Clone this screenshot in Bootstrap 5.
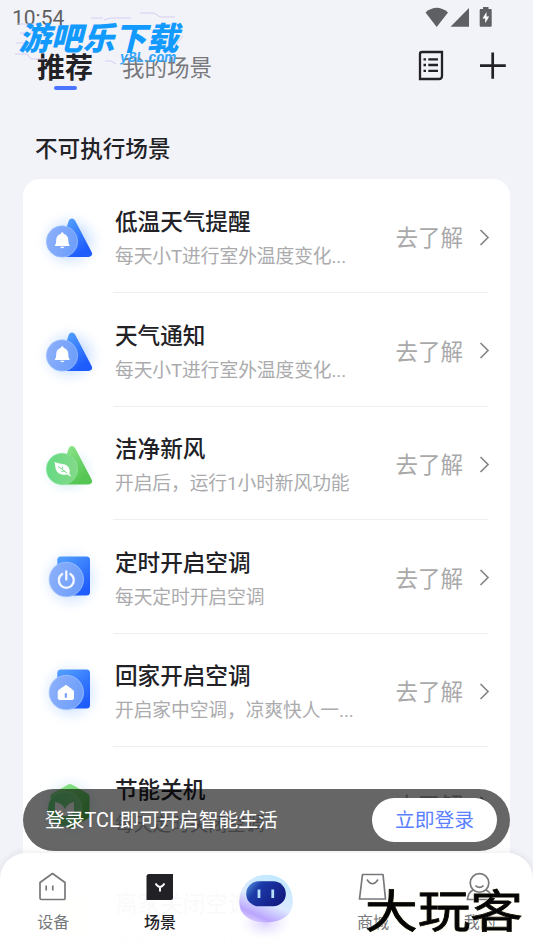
<!DOCTYPE html>
<html lang="zh-CN">
<head>
    <meta charset="UTF-8">
    <meta name="viewport" content="width=device-width, initial-scale=1.0">
    <title>场景</title>
    <link href="https://cdn.jsdelivr.net/npm/bootstrap@5.3.0/dist/css/bootstrap.min.css" rel="stylesheet">
    <style>
        body { background-color: #f2f3f8; color: #212126; font-family: Roboto, "Noto Sans CJK SC", sans-serif; }
        .screen { width: 533px; height: 948px; }
        .status-bar { height: 35px; padding: 2px 40px 0 12px; color: #5f6063; font-size: 21px; line-height: 35px; }
        .status-bar svg { margin-top: -2px; }
        .top-tabs { height: 86px; padding: 12px 26px 0 37px; }
        .tab-on { font-size: 28px; line-height: 44px; font-weight: 700; }
        .tab-line { width: 23px; height: 4px; background: #4b75ff; margin-top: -5px; }
        .tab-off { font-size: 22.5px; line-height: 43px; color: #77787c; margin-left: 29px; }
        .top-tools { margin-top: 3px; }
        .section-title { font-size: 22.6px; line-height: 30px; font-weight: 500; padding: 14px 0 0 35px; height: 58px; }
        .scene-card { margin: 0 23px; border: 0; border-radius: 17px; }
        .scene-row { height: 113.6px; padding-left: 12px; padding-right: 17px; }
        .scene-icon { width: 70px; height: 72px; flex: none; }
        .scene-body { margin-left: 8px; padding: 0; height: 114px; border-bottom: 1px solid #efeff1; margin-right: 5px; }
        .scene-name { font-size: 22.6px; line-height: 32px; font-weight: 500; margin-top: 28px; padding-left: 2px; }
        .scene-desc { font-size: 18.75px; line-height: 28px; color: #ababae; margin-top: 4px; padding-left: 2px; letter-spacing: -.08px; }
        .scene-more { font-size: 22.5px; color: #a9a9aa; line-height: 34px; height: 34px; margin-top: 42px; margin-right: -3px; }
        .scene-more svg { margin-top: -2px; }
        .login-tip { left: 23px; top: 789px; width: 487px; height: 62px; padding: 0 13px 0 22px; background: rgba(0,0,0,.6); color: #fff; font-size: 19.8px; }
        .login-text { padding-top: 2px; }
        .login-btn { width: 125px; height: 44px; background: #fff; color: #5a7fff; font-size: 19.8px; line-height: 46px; }
        .tab-bar { left: 0; top: 853px; width: 533px; height: 95px; border-radius: 26px 26px 0 0; background: rgba(255,255,255,.98); box-shadow: 0 -1px 6px rgba(60,60,90,.1); }
        .tab-item { width: 20%; padding-top: 19px; color: #77787b; font-size: 16px; line-height: 24px; }
        .tab-item svg { margin-bottom: 9px; }
        .tab-item.current { color: #212126; font-weight: 500; }
        .tab-item.robot { padding-top: 14px; }
        .site-lines { left: 10px; top: 8px; }
        .site-name { left: 22px; top: 14px; font: 900 32px/44px "Noto Sans CJK SC", sans-serif; color: #139aff; transform: skewX(-14deg); }
        .site-url { left: 120px; top: 48px; font: italic 700 13.2px/18px "Inter", sans-serif; color: #36a7ff; }
        .brand-name { left: 365px; top: 880px; font: 400 45px/58px "Noto Sans CJK SC", sans-serif; color: #050505; transform: scaleX(1.17); transform-origin: left; -webkit-text-stroke: .8px #050505; text-shadow: 0 0 2px #fff4cf, 0 0 2px #fff4cf; }
    </style>
</head>
<body>
    <!-- Shared gradients and scene shapes -->
    <svg width="0" height="0" class="position-absolute">
        <defs>
            <linearGradient id="blue" x1="0" y1="0" x2=".7" y2="1"><stop stop-color="#55a2ff"/><stop offset="1" stop-color="#1e5cfb"/></linearGradient>
            <linearGradient id="green" x1="0" y1="0" x2=".7" y2="1"><stop stop-color="#8ce58a"/><stop offset="1" stop-color="#55c553"/></linearGradient>
            <linearGradient id="blueDisc" x1="0" x2="1" y2=".3"><stop stop-color="#8fb1fa"/><stop offset="1" stop-color="#6f9ffb"/></linearGradient>
            <linearGradient id="greenDisc" x1="0" x2="1"><stop stop-color="#66db83"/><stop offset="1" stop-color="#83d889"/></linearGradient>
            <radialGradient id="glow"><stop offset=".45" stop-color="#a9cbff" stop-opacity=".5"/><stop offset=".75" stop-color="#d5e7ff" stop-opacity=".25"/><stop offset="1" stop-color="#eef6ff" stop-opacity="0"/></radialGradient>
            <radialGradient id="glowGreen"><stop offset=".4" stop-color="#a8ddc0" stop-opacity=".5"/><stop offset=".75" stop-color="#dceefa" stop-opacity=".25"/><stop offset="1" stop-color="#eefaff" stop-opacity="0"/></radialGradient>
            <linearGradient id="robotFace" x1="0" x2="1" y2=".5"><stop stop-color="#5a9ce0"/><stop offset=".35" stop-color="#1c3aa8"/><stop offset="1" stop-color="#141c84"/></linearGradient>
            <linearGradient id="robotBody" x1=".75" y1="0" x2=".25" y2="1"><stop stop-color="#bfe9ff"/><stop offset=".55" stop-color="#dceaff"/><stop offset=".85" stop-color="#bba5ff"/><stop offset="1" stop-color="#dccfff"/></linearGradient>
            <radialGradient id="robotGlow"><stop stop-color="#c5b4ff" stop-opacity=".6"/><stop offset="1" stop-color="#e4dcff" stop-opacity="0"/></radialGradient>
            <g id="bell">
                <ellipse cx="35" cy="42" rx="35" ry="32" fill="url(#glow)"/>
                <path d="M37 22.500L53.500 54H27Z" fill="url(#blue)" stroke="url(#blue)" stroke-width="7" stroke-linejoin="round"/>
                <circle cx="27" cy="42" r="15.700" fill="url(#blueDisc)" stroke="#a5c4ff" stroke-width=".6"/>
                <path d="M26 34.200c0-2 2.500-2 2.500 0 3.400 1 4.800 3.400 4.800 6.600 0 2.800.5 3.800 1.600 5.800H19.600c1.100-2 1.600-3 1.600-5.800 0-3.200 1.400-5.600 4.800-6.600Z" fill="#fff"/>
                <path d="M25 47.300h4.500q-2.200 3-4.500 0Z" fill="#fff"/>
            </g>
            <g id="square">
                <ellipse cx="36" cy="38" rx="34" ry="35" fill="url(#glow)"/>
                <rect x="22.300" y="15.500" width="32.700" height="39" rx="3.500" fill="url(#blue)"/>
                <circle cx="31.300" cy="38.500" r="17.200" fill="url(#blueDisc)" stroke="#a8c7ff" stroke-width=".7"/>
            </g>
            <path id="arrow" d="M1.500 2l7.500 7.500-7.500 7.500" fill="none" stroke="#85868a" stroke-width="1.700"/>
        </defs>
    </svg>

    <div class="screen position-relative overflow-hidden">
        <!-- Status bar -->
        <div class="status-bar d-flex justify-content-between align-items-center">
            <span>10:54</span>
            <svg width="69" height="22" viewBox="424 7 69 22" fill="#5f6063">
                <path d="M425.500 12.500q11.300-9.300 22.500 0L436.700 27Z"/>
                <path d="M469 8v18.700h-18.500Z"/>
                <path d="M483 7h5.500v2h2.200q1 0 1 1v15.700q0 1-1 1h-10q-1 0-1-1V10q0-1 1-1h2.300Z"/>
                <path d="M486.500 12l-4 6.500h2.700v4.700l4-6.700h-2.700Z" fill="#fff"/>
            </svg>
        </div>

        <!-- Page tabs -->
        <div class="top-tabs d-flex align-items-start">
            <div class="d-flex flex-column align-items-center">
                <div class="tab-on">推荐</div>
                <div class="tab-line rounded-pill"></div>
            </div>
            <div class="tab-off">我的场景</div>
            <svg class="top-tools ms-auto" width="90" height="32" viewBox="417 50 90 32" fill="none" stroke="#212126" stroke-width="2.300">
                <path d="M422 52h20v24q0 3-3 3h-19V54q0-2 2-2Z"/>
                <path d="M428.300 59.300H438M428.300 65H438M428.300 70.800H438M423.500 59.300h2.500M423.500 65h2.500M423.500 70.800h2.500"/>
                <path d="M480 65.700h25.800M492.700 52.500v26.300" stroke-width="2.700"/>
            </svg>
        </div>

        <div class="section-title">不可执行场景</div>

        <!-- Scene list -->
        <div class="card scene-card">
            <div class="scene-row d-flex">
                <svg class="scene-icon mt-4" viewBox="0 3.500 70 72"><use href="#bell"/></svg>
                <div class="scene-body flex-grow-1 d-flex justify-content-between">
                    <div><div class="scene-name">低温天气提醒</div><div class="scene-desc">每天小T进行室外温度变化...</div></div>
                    <div class="scene-more d-flex align-items-center">去了解<svg class="ms-3" width="12" height="19"><use href="#arrow"/></svg></div>
                </div>
            </div>
            <div class="scene-row d-flex">
                <svg class="scene-icon mt-4" viewBox="0 3.500 70 72"><use href="#bell"/></svg>
                <div class="scene-body flex-grow-1 d-flex justify-content-between">
                    <div><div class="scene-name">天气通知</div><div class="scene-desc">每天小T进行室外温度变化...</div></div>
                    <div class="scene-more d-flex align-items-center">去了解<svg class="ms-3" width="12" height="19"><use href="#arrow"/></svg></div>
                </div>
            </div>
            <div class="scene-row d-flex">
                <svg class="scene-icon mt-4" viewBox="0 3 70 72">
                    <ellipse cx="33" cy="44" rx="30" ry="26" fill="url(#glowGreen)"/>
                    <path d="M37 22.500L53.500 54H27Z" fill="url(#green)" stroke="url(#green)" stroke-width="7" stroke-linejoin="round"/>
                    <circle cx="27" cy="42" r="15.700" fill="url(#greenDisc)" stroke="#8be7a0" stroke-width=".6"/>
                    <path d="M19.300 35q4 1.700 8.500 2c6 1 8 5.500 6.300 10.500-6.500 1-12 0-13.500-6-.5-2-.3-4.500-1.300-6.500Z" fill="#fff"/>
                    <path d="M23 39.500q5 3 9.500 7" fill="none" stroke="#70d682" stroke-width=".9"/>
                    <path d="M27.500 39.500v3M26 44.300h4" fill="none" stroke="#70d682" stroke-width=".8"/>
                    <path d="M32.500 46l3 3" stroke="#fff" stroke-width="1.300"/>
                </svg>
                <div class="scene-body flex-grow-1 d-flex justify-content-between">
                    <div><div class="scene-name">洁净新风</div><div class="scene-desc">开启后，运行1小时新风功能</div></div>
                    <div class="scene-more d-flex align-items-center">去了解<svg class="ms-3" width="12" height="19"><use href="#arrow"/></svg></div>
                </div>
            </div>
            <div class="scene-row d-flex">
                <svg class="scene-icon mt-4" viewBox="0 3 70 72">
                    <use href="#square"/>
                    <path d="M27.200 33a7.500 7.500 0 1 0 8.200 0M31.300 30.500v8" fill="none" stroke="#f4f7ff" stroke-width="2.300" stroke-linecap="round"/>
                </svg>
                <div class="scene-body flex-grow-1 d-flex justify-content-between">
                    <div><div class="scene-name">定时开启空调</div><div class="scene-desc">每天定时开启空调</div></div>
                    <div class="scene-more d-flex align-items-center">去了解<svg class="ms-3" width="12" height="19"><use href="#arrow"/></svg></div>
                </div>
            </div>
            <div class="scene-row d-flex">
                <svg class="scene-icon mt-4" viewBox="0 3 70 72">
                    <use href="#square"/>
                    <path d="M31 31.300l6.500 4.700q1 .7 1 2v6q0 1.500-1.500 1.500H24.700q-1.500 0-1.500-1.500v-6q0-1.300 1-2Z" fill="#fff" stroke="#fff" stroke-linejoin="round"/>
                    <rect x="29.700" y="39" width="2.300" height="5" rx="1" fill="#7ba5fb"/>
                </svg>
                <div class="scene-body flex-grow-1 d-flex justify-content-between">
                    <div><div class="scene-name">回家开启空调</div><div class="scene-desc">开启家中空调，凉爽快人一...</div></div>
                    <div class="scene-more d-flex align-items-center">去了解<svg class="ms-3" width="12" height="19"><use href="#arrow"/></svg></div>
                </div>
            </div>
            <div class="scene-row d-flex">
                <svg class="scene-icon mt-4" viewBox="0 3 70 72">
                    <ellipse cx="35" cy="38" rx="33" ry="34" fill="url(#glowGreen)"/>
                    <path d="M35 19.500l16 9v19l-16 9-16-9v-19Z" fill="url(#green)" stroke="url(#green)" stroke-width="7" stroke-linejoin="round"/>
                    <circle cx="30" cy="41" r="17" fill="url(#greenDisc)" stroke="#a5efad" stroke-width=".6"/>
                    <path d="M20 34q7 1 10 7 3-6 9-7v10q-4 4-9 4t-10-4Z" fill="#fff"/>
                </svg>
                <div class="scene-body flex-grow-1 d-flex justify-content-between">
                    <div><div class="scene-name">节能关机</div><div class="scene-desc">每天定时关闭空调</div></div>
                    <div class="scene-more d-flex align-items-center">去了解<svg class="ms-3" width="12" height="19"><use href="#arrow"/></svg></div>
                </div>
            </div>
            <div class="scene-row d-flex">
                <svg class="scene-icon mt-4" viewBox="0 3 70 72"><rect x="22" y="16" width="32" height="39" rx="3" fill="#ffd9a0"/></svg>
                <div class="scene-body flex-grow-1 d-flex justify-content-between">
                    <div><div class="scene-name">离家关闭空调</div><div class="scene-desc">离家时，关闭正在运行的空...</div></div>
                </div>
            </div>
        </div>

        <!-- Login prompt -->
        <div class="login-tip position-absolute d-flex align-items-center justify-content-between rounded-pill">
            <span class="login-text">登录TCL即可开启智能生活</span>
            <span class="login-btn rounded-pill text-center">立即登录</span>
        </div>

        <!-- Bottom navigation -->
        <div class="tab-bar position-absolute d-flex">
            <div class="tab-item d-flex flex-column align-items-center">
                <svg width="30" height="30" viewBox="0 0 30 30" fill="none" stroke="#77787b" stroke-width="1.700" stroke-linejoin="round"><path d="M14.500 1.500L27 10.500v16q0 1-1 1H3.500q-1.500 0-1.500-1.500V10.500Z"/><path d="M8.200 13.500v5M14.800 13.500v5"/></svg>
                <span>设备</span>
            </div>
            <div class="tab-item current d-flex flex-column align-items-center">
                <svg width="30" height="30" viewBox="0 0 30 30"><path d="M4 2h24v24q0 2-2 2H1.500V4.500q0-2.500 2.500-2.500Z" fill="#212126"/><path d="M10.500 11.500q2.500 3.500 4.500 3.500t4.500-3.500M15 15v4.500" fill="none" stroke="#fff" stroke-width="2"/></svg>
                <span>场景</span>
            </div>
            <div class="tab-item robot d-flex flex-column align-items-center">
                <svg width="64" height="78" viewBox="234.500 866.500 64 78">
                    <ellipse cx="266" cy="927" rx="28" ry="18" fill="url(#robotGlow)"/>
                    <path d="M267 875c18 0 28.500 13 28.500 29 0 15-12 22.500-29 22.500s-29-7-29-22.500c0-16 11.500-29 29.500-29Z" fill="url(#robotBody)"/>
                    <rect x="245" y="882" width="43" height="27" rx="13.500" fill="url(#robotFace)"/>
                    <path d="M258.900 891v9M273.800 891v9" stroke="#b6e0fc" stroke-width="3"/>
                </svg>
            </div>
            <div class="tab-item d-flex flex-column align-items-center">
                <svg width="30" height="30" viewBox="0 0 30 30" fill="none" stroke="#77787b" stroke-width="1.700"><path d="M4.500 2.500h20.500L27.500 27h-26Z" stroke-linejoin="round"/><path d="M9 7.500q5.500 8.500 11 0"/></svg>
                <span>商城</span>
            </div>
            <div class="tab-item d-flex flex-column align-items-center">
                <svg width="30" height="30" viewBox="0 0 30 30" fill="none" stroke="#77787b" stroke-width="1.700"><circle cx="14.500" cy="11" r="9.300"/><path d="M10.500 13.500q4 4 8 0M8 18q-5 2.500-5.500 9.500h24.500Q26.500 20.500 21 18"/></svg>
                <span>我的</span>
            </div>
        </div>

        <!-- Site marks -->
        <svg class="site-lines position-absolute" width="180" height="60" viewBox="10 8 180 60" fill="none" stroke="#d5cdf3" stroke-width="1">
            <path d="M140 13h14l6 4h15M91 18h12M104 20l6-2h21M18 24h20M20 33h17M16 43h18M15 54h12l4 5h14M105 61h6l5 3M183 36l-9 11M165 52h10"/>
        </svg>
        <div class="site-name position-absolute text-nowrap">游吧乐下载</div>
        <div class="site-url position-absolute">y8L.com</div>
        <div class="brand-name position-absolute text-nowrap">大玩客</div>
    </div>

    <script src="https://cdn.jsdelivr.net/npm/bootstrap@5.3.0/dist/js/bootstrap.bundle.min.js"></script>
</body>
</html>
